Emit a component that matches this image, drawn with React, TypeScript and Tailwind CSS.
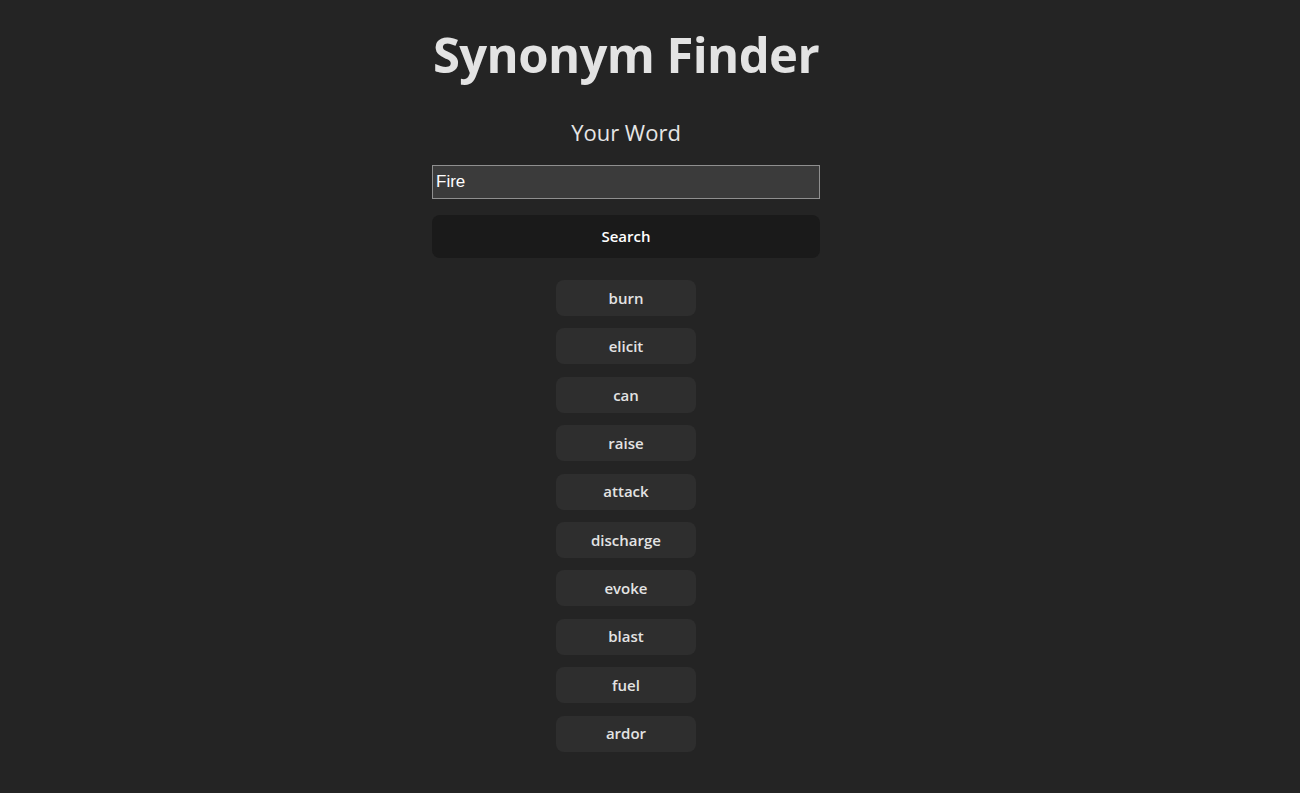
import React, { useState } from 'react';

const synonyms = ['burn', 'elicit', 'can', 'raise', 'attack', 'discharge', 'evoke', 'blast', 'fuel', 'ardor'];

const font = { fontFamily: '"Segoe UI", "Open Sans", "Noto Sans", sans-serif' };

export default function App() {
  const [word, setWord] = useState('Fire');

  return (
    <div className="min-h-[793px] bg-[#242424] text-[#e6e6e6] pr-[48px]" style={font}>
      <div className="mx-auto w-[388px] flex flex-col items-center">
        <h1 className="mt-[19px] whitespace-nowrap text-[49px] leading-[70px] font-bold tracking-[-0.6px] text-[#e3e3e3]">
          Synonym Finder
        </h1>
        <h2 className="mt-[27px] text-[22px] leading-[32px] font-normal text-[#e6e6e6]">Your Word</h2>
        <input
          value={word}
          onChange={(e) => setWord(e.target.value)}
          className="mt-[17px] w-full h-[34px] bg-[#3b3b3b] border border-[#8f8f8f] px-[3px] text-[17px] text-white outline-none"
          style={{ fontFamily: '"Liberation Sans", Arial, sans-serif' }}
        />
        <button className="mt-[16px] w-full h-[43px] rounded-[8px] bg-[#1a1a1a] text-[15px] font-semibold text-white">
          Search
        </button>
        <div className="mt-[22px] flex flex-col items-center gap-[12.4px]">
          {synonyms.map((s) => (
            <button
              key={s}
              className="w-[140px] h-[36px] rounded-[8px] bg-[#2e2e2e] text-[15px] font-semibold text-[#e3e3e3]"
            >
              {s}
            </button>
          ))}
        </div>
      </div>
    </div>
  );
}
